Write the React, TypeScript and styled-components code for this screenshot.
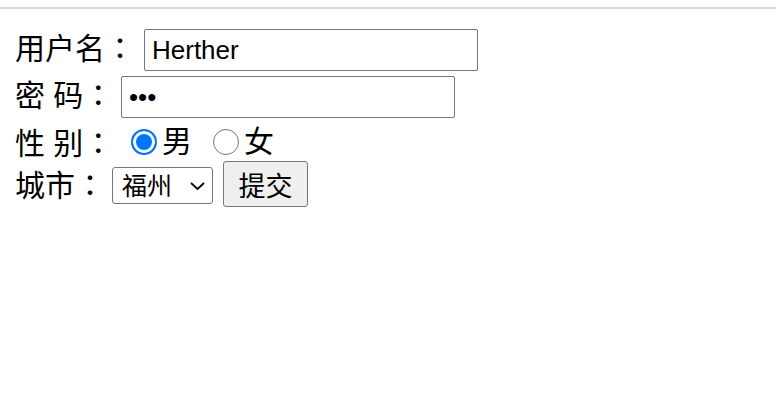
import React from "react";
import styled, { createGlobalStyle } from "styled-components";

const Global = createGlobalStyle`
  html, body { margin: 0; padding: 0; background: #ffffff; }
  body {
    font-family: "Liberation Sans", "Noto Sans CJK SC", sans-serif;
    color: #000000;
  }
`;

const TopRule = styled.div`
  width: 776px;
  height: 2px;
  margin-top: 7px;
  background: #dadbe0;
`;

const Form = styled.form`
  display: flex;
  flex-direction: column;
  padding: 0 15px;
  margin: 0;
`;

const Row = styled.div<{ $top: number; $h: number; $align?: string }>`
  display: flex;
  align-items: ${(p) => p.$align || "baseline"};
  height: ${(p) => p.$h}px;
  margin-top: ${(p) => p.$top}px;
`;

const Label = styled.label<{ $w: number }>`
  flex: 0 0 ${(p) => p.$w}px;
  font-size: 30px;
  line-height: 30px;
  white-space: pre;
`;

const Colon = styled.span`
  font-family: "Noto Sans CJK TC", "Noto Sans CJK SC", sans-serif;
`;

const TextField = styled.input`
  box-sizing: border-box;
  width: 334px;
  height: 42px;
  padding: 0 7px;
  border: 1px solid #767676;
  border-radius: 2px;
  font-family: "Liberation Sans", "Noto Sans CJK SC", sans-serif;
  font-size: 26px;
  color: #000;
  background: #fff;
  outline: none;
`;

const Radio = styled.input<{ $gap: number }>`
  appearance: none;
  box-sizing: border-box;
  width: 26px;
  height: 26px;
  margin: 0 5px 0 ${(p) => p.$gap}px;
  border-radius: 50%;
  border: 1.5px solid #767676;
  background: #fff;
  flex-shrink: 0;
  &:checked {
    border: 2px solid #0075ff;
    background: #0075ff;
    box-shadow: inset 0 0 0 3px #ffffff;
  }
`;

const Choice = styled.span`
  font-size: 30px;
  line-height: 30px;
`;

const SelectWrap = styled.span`
  position: relative;
  display: inline-flex;
  align-self: center;
  margin-top: 3px;
`;

const CitySelect = styled.select`
  appearance: none;
  box-sizing: border-box;
  width: 101px;
  height: 37px;
  padding: 0 0 0 9px;
  border: 1px solid #767676;
  border-radius: 3px;
  background: #fff;
  color: #000;
  font-family: "Liberation Sans", "Noto Sans CJK SC", sans-serif;
  font-size: 25px;
  outline: none;
`;

const Chevron = styled.svg`
  position: absolute;
  right: 7px;
  top: 14px;
  width: 17px;
  height: 10px;
  pointer-events: none;
`;

const SubmitButton = styled.button`
  box-sizing: border-box;
  align-self: center;
  width: 85px;
  height: 46px;
  margin-left: 10px;
  padding: 0;
  border: 1px solid #767676;
  border-radius: 3px;
  background: #efefef;
  color: #000;
  font-family: "Liberation Sans", "Noto Sans CJK SC", sans-serif;
  font-size: 27px;
`;

export default function App() {
  return (
    <>
      <Global />
      <TopRule />
      <Form onSubmit={(e) => e.preventDefault()}>
        <Row $top={20} $h={42}>
          <Label $w={129}>用户名<Colon>：</Colon></Label>
          <TextField type="text" defaultValue="Herther" />
        </Row>
        <Row $top={5} $h={42}>
          <Label $w={106}>密 码<Colon>：</Colon></Label>
          <TextField type="password" defaultValue="abc" />
        </Row>
        <Row $top={9} $h={30} $align="center">
          <Label $w={116}>性 别<Colon>：</Colon></Label>
          <Radio type="radio" name="sex" defaultChecked $gap={0} />
          <Choice>男</Choice>
          <Radio type="radio" name="sex" $gap={21} />
          <Choice>女</Choice>
        </Row>
        <Row $top={4} $h={46} $align="center">
          <Label $w={97}>城市<Colon>：</Colon></Label>
          <SelectWrap>
            <CitySelect defaultValue="福州">
              <option>福州</option>
              <option>厦门</option>
              <option>泉州</option>
            </CitySelect>
            <Chevron viewBox="0 0 17 10">
              <path d="M2 2 L8.5 8 L15 2" fill="none" stroke="#000" strokeWidth="1.8" />
            </Chevron>
          </SelectWrap>
          <SubmitButton type="submit">提交</SubmitButton>
        </Row>
      </Form>
    </>
  );
}
